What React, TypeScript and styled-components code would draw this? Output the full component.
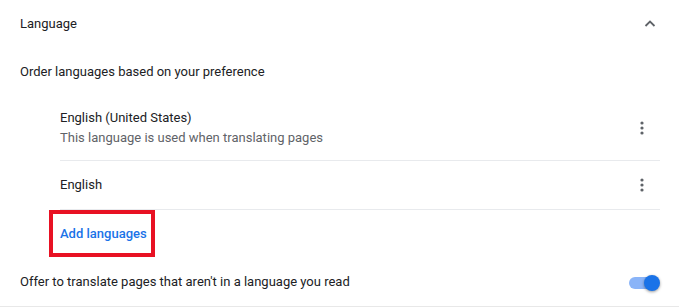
import React from 'react';
import styled, { createGlobalStyle } from 'styled-components';

const GlobalStyle = createGlobalStyle`
  html, body {
    margin: 0;
    padding: 0;
    background: #ffffff;
  }
  body {
    font-family: Roboto, "Liberation Sans", Arial, sans-serif;
    font-size: 13px;
    color: #202124;
    -webkit-font-smoothing: antialiased;
  }
`;

const Card = styled.section`
  width: 679px;
  background: #fff;
  border-bottom: 1px solid #e8e8e8;
`;

const Row = styled.div<{ $height?: number }>`
  display: flex;
  align-items: center;
  justify-content: space-between;
  height: ${p => p.$height ?? 48}px;
  padding: 0 19px 0 20px;
  box-sizing: border-box;
`;

const Label = styled.div`
  font-size: 13px;
  line-height: 20px;
  color: #202124;
`;

const List = styled.div`
  margin: 0 19px 0 60px;
`;

const Item = styled.div<{ $height: number }>`
  display: flex;
  align-items: center;
  justify-content: space-between;
  height: ${p => p.$height}px;
  border-bottom: 1px solid #e8eaed;
`;

const TextBlock = styled.div`
  display: flex;
  flex-direction: column;
`;

const Secondary = styled.div`
  font-size: 13px;
  line-height: 20px;
  color: #5f6368;
`;

const IconButton = styled.button`
  width: 36px;
  height: 36px;
  display: flex;
  align-items: center;
  justify-content: center;
  border: none;
  background: none;
  padding: 0;
  margin-right: 0;
  color: #5f6368;
`;

const Highlight = styled.span`
  display: inline-flex;
  align-items: center;
  border: 4px solid #e81123;
  padding: 4px 4px 4px 7px;
  height: 31px;
  box-sizing: content-box;
  margin-left: -11px;
  margin-top: -1px;
`;

const Link = styled.a`
  font-size: 13px;
  font-weight: 500;
  color: #1a73e8;
  text-decoration: none;
  cursor: pointer;
`;

const AddRow = styled.div`
  display: flex;
  align-items: center;
  height: 48px;
  padding-left: 60px;
`;

const Toggle = styled.div`
  position: relative;
  width: 31px;
  height: 16px;
  margin-top: 1px;
`;

const Track = styled.div`
  position: absolute;
  left: 0;
  top: 2px;
  width: 28px;
  height: 12px;
  border-radius: 6px;
  background: #8ab4f8;
`;

const Knob = styled.div`
  position: absolute;
  right: 0;
  top: 0;
  width: 16px;
  height: 16px;
  border-radius: 50%;
  background: #1a73e8;
  box-shadow: 0 1px 3px rgba(0, 0, 0, 0.4);
`;

const Chevron = () => (
  <svg width="20" height="20" viewBox="0 0 20 20">
    <path d="M5.5 12 L10 7.5 L14.5 12" fill="none" stroke="#5f6368" strokeWidth="1.8" />
  </svg>
);

const Kebab = () => (
  <svg width="4" height="14" viewBox="0 0 4 14">
    <circle cx="2" cy="2" r="1.6" fill="#5f6368" />
    <circle cx="2" cy="7" r="1.6" fill="#5f6368" />
    <circle cx="2" cy="12" r="1.6" fill="#5f6368" />
  </svg>
);

export default function App() {
  return (
    <>
      <GlobalStyle />
      <Card>
        <Row>
          <Label>Language</Label>
          <Chevron />
        </Row>
        <Row>
          <Label>Order languages based on your preference</Label>
        </Row>
        <List>
          <Item $height={64}>
            <TextBlock>
              <Label>English (United States)</Label>
              <Secondary>This language is used when translating pages</Secondary>
            </TextBlock>
            <IconButton><Kebab /></IconButton>
          </Item>
          <Item $height={48}>
            <Label>English</Label>
            <IconButton><Kebab /></IconButton>
          </Item>
        </List>
        <AddRow>
          <Highlight>
            <Link>Add languages</Link>
          </Highlight>
        </AddRow>
        <Row $height={48}>
          <Label>Offer to translate pages that aren't in a language you read</Label>
          <Toggle>
            <Track />
            <Knob />
          </Toggle>
        </Row>
      </Card>
    </>
  );
}
